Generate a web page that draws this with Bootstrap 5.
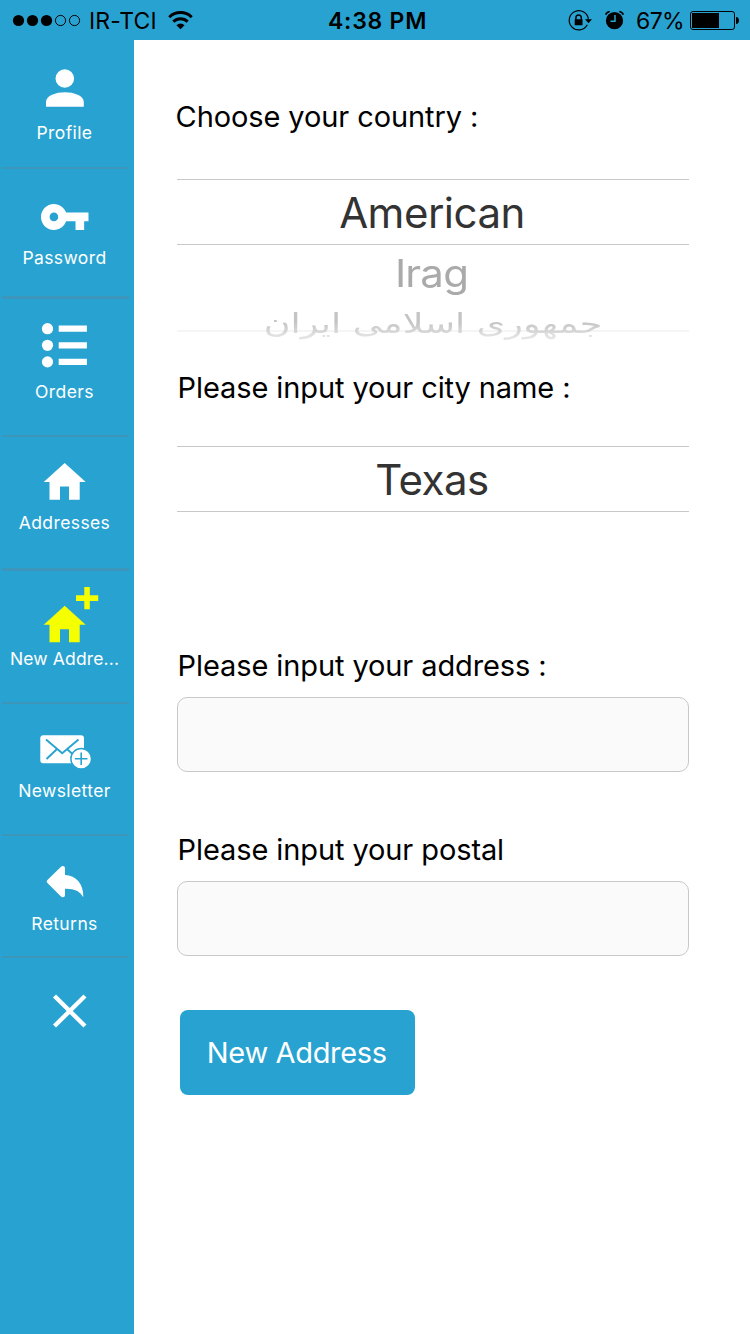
<!DOCTYPE html>
<html lang="en">
<head>
<meta charset="utf-8">
<meta name="viewport" content="width=device-width, initial-scale=1">
<title>New Address</title>
<link href="https://cdn.jsdelivr.net/npm/bootstrap@5.3.0/dist/css/bootstrap.min.css" rel="stylesheet">
<style>
:root { --brand: #28a3d1; }
body { font-family: Inter, "Noto Sans", sans-serif; color: #000; background: #fff; height: 1334px; overflow: hidden; }
svg { display: block; flex: none; }
.status-bar { height: 40px; background: var(--brand); line-height: 42px; font-size: 23px; }
.status-bar span { flex: none; white-space: nowrap; }
.carrier { width: 79px; letter-spacing: .15px; }
.clock { width: 239px; font-weight: 600; letter-spacing: .75px; }
.percent { width: 53px; letter-spacing: -.6px; }
.side-menu { width: 134px; background: var(--brand); }
.menu-entry { width: 131px; color: #fff; text-decoration: none; font-size: 17.5px; line-height: 26px; letter-spacing: .4px; }
.menu-entry span { width: 129px; text-align: center; white-space: nowrap; }
.menu-entry::after { content: ""; margin: auto 2px 0; width: 127px; height: 2px; background: #3d96ba; }
.menu-entry.thick::after { height: 3px; }
.form-area { padding-left: 43px; }
.field-name { font-size: 29px; line-height: 36px; white-space: nowrap; letter-spacing: -.1px; font-weight: 400; margin: 0; padding-left: .6px; }
.wheel { width: 512px; text-align: center; }
.wheel-current { height: 66px; border: solid #c8c8c8; border-width: 1px 0; line-height: 65px; font-size: 42px; letter-spacing: -.5px; color: #333; padding-right: 2px; }
.wheel-next { height: 56px; line-height: 56px; font-size: 42px; letter-spacing: -.8px; color: #aaa; transform: scaleY(.9); padding-right: 3px; }
.wheel-last { height: 44px; line-height: 44px; font-family: "DejaVu Sans", sans-serif; font-size: 36.5px; transform: scaleY(.74); white-space: nowrap; color: #c4c4c4; -webkit-mask-image: linear-gradient(#000 45%, rgba(0,0,0,.45) 90%); mask-image: linear-gradient(#000 45%, rgba(0,0,0,.45) 90%); }
.wheel-edge { height: 2px; background: #f5f5f5; }
.entry-box { width: 512px; height: 75px; background: #fafafa; border: 1px solid #c8c8c8; border-radius: 10px; }
.submit-btn { width: 235px; height: 85px; margin-left: 3px; background: var(--brand); color: #fff; border: 0; border-radius: 8px; font-size: 29px; letter-spacing: -.35px; padding: 0 1.5px 0 0; }
</style>
</head>
<body class="d-flex flex-column">
<header class="status-bar d-flex">
  <svg width="89" height="40" viewBox="0 0 89 40"><g fill="#000"><circle cx="18.500" cy="20.500" r="5.600"/><circle cx="32.500" cy="20.500" r="5.600"/><circle cx="46.500" cy="20.500" r="5.600"/></g><g fill="none" stroke="#000"><circle cx="60.500" cy="20.500" r="5.100"/><circle cx="74.500" cy="20.500" r="5.100"/></g></svg>
  <span class="carrier">IR-TCI</span>
  <svg width="160" height="40" viewBox="168 0 160 40"><g fill="none" stroke="#000" stroke-width="3"><path d="M169.300 17.200a15.800 15.800 0 0 1 22.400 0"/><path d="M173.300 21.600a10.300 10.300 0 0 1 14.400 0"/></g><path d="M176.400 25.200a6 6 0 0 1 8.200 0l-4.100 4z"/></svg>
  <span class="clock">4:38 PM</span>
  <svg width="69" height="40" viewBox="567 0 69 40"><g fill="none" stroke="#000" stroke-width="1.200"><path d="M587.300 24.800A9.600 9.600 0 1 1 588.400 19.500"/><path d="M575.900 20v-2.200a2.700 2.900 0 0 1 5.400 0V20" stroke-width="1.500"/></g><path d="M574.700 19.300h7.800v6h-7.800zM585 19.200h7l-3.500 4z"/><circle cx="614.500" cy="20.700" r="8.600"/><path d="M605.700 14.800c.5-1.700 2-3 4-3.300M623.300 14.800c-.5-1.700-2-3-4-3.300" fill="none" stroke="#000" stroke-width="1.500"/><path d="M615 15v6.300h-4.500" fill="none" stroke="#28a3d1" stroke-width="1.500"/></svg>
  <span class="percent">67%</span>
  <svg width="61" height="40" viewBox="689 0 61 40"><rect x="690.500" y="11.500" width="44" height="18" rx="2.500" fill="none" stroke="#000"/><path d="M692 13h27v15h-27zM736 17c4 0 4 7 0 7z"/></svg>
</header>

<div class="d-flex flex-grow-1">
  <nav class="side-menu d-flex flex-column flex-shrink-0">
    <a class="menu-entry d-flex flex-column" href="#" style="height:129px">
      <svg width="129" height="80" viewBox="0 40 129 80" fill="#fff"><circle cx="64.800" cy="78.500" r="9.300"/><path d="M46 106.700V102c0-6.500 10-9.800 18.900-9.800s18.900 3.300 18.900 9.800v4.700z"/></svg>
      <span>Profile</span></a>
    <a class="menu-entry thick d-flex flex-column" href="#" style="height:130px">
      <svg width="129" height="76" viewBox="0 169 129 76" fill="#fff"><path transform="translate(38.800 191) scale(2.160)" d="M12.650 10C11.830 7.670 9.610 6 7 6c-3.310 0-6 2.690-6 6s2.690 6 6 6c2.610 0 4.830-1.670 5.650-4H17v4h4v-4h2v-4H12.650zM7 14c-1.100 0-2-.9-2-2s.9-2 2-2 2 .9 2 2-.9 2-2 2z"/></svg>
      <span>Password</span></a>
    <a class="menu-entry d-flex flex-column" href="#" style="height:138px">
      <svg width="129" height="80" viewBox="0 299 129 80" fill="#fff"><circle cx="47.500" cy="328.700" r="5.600"/><circle cx="47.500" cy="345.300" r="5.600"/><circle cx="47.500" cy="361.900" r="5.600"/><path d="M58.700 325.500h28.200v6.200H58.700zM58.700 342.200h28.200v6.200H58.700zM58.700 358.800h28.200v6.200H58.700z"/></svg>
      <span>Orders</span></a>
    <a class="menu-entry thick d-flex flex-column" href="#" style="height:134px">
      <svg width="129" height="73" viewBox="0 437 129 73" fill="#fff"><path d="M64.700 463L85.700 482H79.700V499.700H69V486.400H60V499.700H49.500V482H43.700z"/></svg>
      <span>Addresses</span></a>
    <a class="menu-entry d-flex flex-column" href="#" style="height:133px">
      <svg width="129" height="75" viewBox="0 571 129 75" fill="#f6ff00"><path d="M64.700 605.700L85.700 624.700H79.700V642.200H69V629.200H60V642.200H49.500V624.700H43.700zM84.300 587h5.500v8.300h8.400v5.600h-8.400v8.300h-5.500v-8.300H76v-5.600h8.300z"/></svg>
      <span style="letter-spacing:.15px">New Addre...</span></a>
    <a class="menu-entry d-flex flex-column" href="#" style="height:132px">
      <svg width="129" height="74" viewBox="0 704 129 74"><rect x="40.300" y="735.200" width="43.700" height="28" rx="3" fill="#fff"/><g fill="none" stroke="#28a3d1" stroke-width="1.900"><path d="M46 739.500L62.200 753.300L78.500 739.500M46.500 759L56.500 749.500M78 759L67.500 749.500"/></g><circle cx="81.200" cy="758.700" r="10.300" fill="#fff" stroke="#28a3d1" stroke-width="1.500"/><path d="M81.200 752.500v12.600M74.900 758.700h12.600" stroke="#28a3d1" stroke-width="1.600"/></svg>
      <span>Newsletter</span></a>
    <a class="menu-entry d-flex flex-column" href="#" style="height:122px">
      <svg width="129" height="75" viewBox="0 836 129 75" fill="#fff"><path d="M47.200 880.200L61 866.800c1.500-1.400 4-.8 4 1.200v7c11 .5 18.800 9 18.300 22.300c-3.500-6-9-8.800-18.300-8.500v6.500c0 2-2.500 2.600-4 1.200L47.200 882.700q-1.200-1.200 0-2.500z"/></svg>
      <span>Returns</span></a>
    <a href="#" aria-label="Close"><svg width="129" height="90" viewBox="0 958 129 90"><path d="M54.500 996L85 1026M85 996L54.500 1026" stroke="#fff" stroke-width="4.300"/></svg></a>
  </nav>

  <main class="form-area flex-grow-1">
    <h1 class="field-name" style="padding-top:59px;margin-left:-2px">Choose your country :</h1>
    <div class="wheel" style="margin-top:44px">
      <div class="wheel-current">American</div>
      <div class="wheel-next">Irag</div>
      <div class="wheel-last" lang="fa" dir="rtl" style="margin-top:1px;margin-bottom:-16px">جمهوری اسلامی ایران</div>
      <div class="wheel-edge"></div>
    </div>
    <h2 class="field-name" style="margin-top:38px">Please input your city name :</h2>
    <div class="wheel" style="margin-top:40px"><div class="wheel-current">Texas</div></div>
    <label class="field-name d-block" for="address" style="margin-top:136px">Please input your address :</label>
    <input id="address" class="entry-box d-block" type="text" style="margin-top:13px">
    <label class="field-name d-block" for="postal" style="margin-top:60px">Please input your postal</label>
    <input id="postal" class="entry-box d-block" type="text" style="margin-top:13px">
    <button class="btn submit-btn d-block" type="button" style="margin-top:54px">New Address</button>
  </main>
</div>
<script src="https://cdn.jsdelivr.net/npm/bootstrap@5.3.0/dist/js/bootstrap.bundle.min.js"></script>
</body>
</html>
